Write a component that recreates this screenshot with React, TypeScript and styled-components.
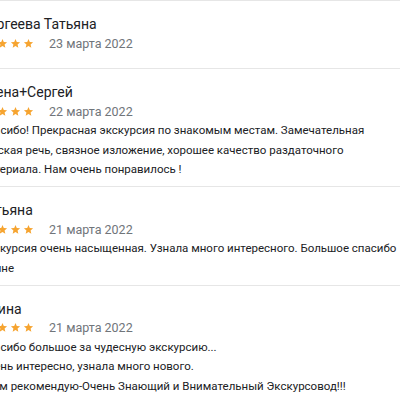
import React from "react";
import styled, { createGlobalStyle } from "styled-components";

const GlobalStyle = createGlobalStyle`
  html, body {
    margin: 0;
    padding: 0;
    background: #ffffff;
    overflow: hidden;
  }
  body {
    font-family: Roboto, "Noto Sans", Arial, sans-serif;
  }
`;

const Viewport = styled.div`
  width: 400px;
  height: 400px;
  overflow: hidden;
`;

const List = styled.div`
  margin-left: -20px;
  width: 440px;
  display: flex;
  flex-direction: column;
`;

const Card = styled.div<{ $empty?: boolean }>`
  border-top: 1px solid #e6e6e6;
  padding: 13px 0 ${(p) => (p.$empty ? "16px" : "6.5px")} 0;
  display: flex;
  flex-direction: column;
`;

const Name = styled.div`
  font-size: 14px;
  line-height: 20px;
  color: #202124;
`;

const RatingRow = styled.div`
  display: flex;
  align-items: center;
  height: 18px;
  gap: 15px;
`;

const Stars = styled.div`
  display: flex;
  gap: 2px;
  margin-left: -9px;
`;

const DateText = styled.span`
  font-size: 12.5px;
  color: #70757a;
`;

const Body = styled.div`
  margin-top: 1px;
  width: 418px;
  font-size: 11.5px;
  line-height: 19.5px;
  color: #202124;
  white-space: pre-line;
`;

const Star = () => (
  <svg width="11" height="11" viewBox="0 0 24 24">
    <path
      fill="#f6a430"
      d="M12 17.27L18.18 21l-1.64-7.03L22 9.24l-7.19-.61L12 2 9.19 8.63 2 9.24l5.46 4.73L5.82 21z"
    />
  </svg>
);

const reviews = [
  { name: "Сергеева Татьяна", date: "23 марта 2022", text: "" },
  {
    name: "Елена+Сергей",
    date: "22 марта 2022",
    text:
      "Спасибо! Прекрасная экскурсия по знакомым местам. Замечательная русская речь, связное изложение, хорошее качество раздаточного материала. Нам очень понравилось !",
  },
  {
    name: "Татьяна",
    date: "21 марта 2022",
    text:
      "Экскурсия очень насыщенная. Узнала много интересного. Большое спасибо Ирине",
  },
  {
    name: "Ирина",
    date: "21 марта 2022",
    text:
      "Спасибо большое за чудесную экскурсию...\nОчень интересно, узнала много нового.\nВсем рекомендую-Очень Знающий и Внимательный Экскурсовод!!!",
  },
];

export default function App() {
  return (
    <Viewport>
      <GlobalStyle />
      <List>
        {reviews.map((r, i) => (
          <Card key={i} $empty={!r.text}>
            <Name>{r.name}</Name>
            <RatingRow>
              <Stars>
                {[0, 1, 2, 3, 4].map((s) => (
                  <Star key={s} />
                ))}
              </Stars>
              <DateText>{r.date}</DateText>
            </RatingRow>
            {r.text && <Body>{r.text}</Body>}
          </Card>
        ))}
      </List>
    </Viewport>
  );
}
